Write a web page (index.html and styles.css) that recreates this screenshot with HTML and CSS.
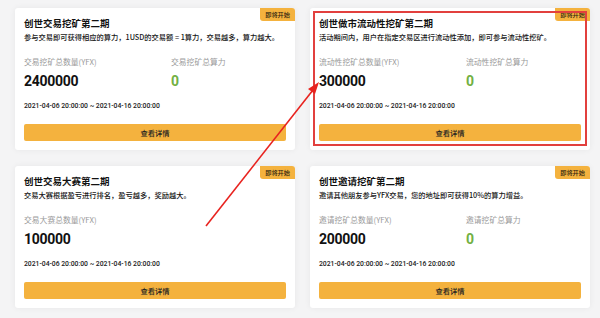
FILE: index.html
```html
<!DOCTYPE html>
<html lang="zh-CN">
<head>
  <meta charset="UTF-8">
  <title>创世挖矿第二期</title>
  <link rel="stylesheet" href="styles.css">
</head>
<body>
  <div class="page">
    <div class="grid">

      <div class="card">
        <span class="badge">即将开始</span>
        <h2 class="title">创世交易挖矿第二期</h2>
        <p class="desc">参与交易即可获得相应的算力，1USD的交易额 = 1算力，交易越多，算力越大。</p>
        <div class="stats">
          <div class="stat">
            <div class="label">交易挖矿总数量(YFX)</div>
            <div class="value">2400000</div>
          </div>
          <div class="stat">
            <div class="label">交易挖矿总算力</div>
            <div class="value green">0</div>
          </div>
        </div>
        <div class="time">2021-04-06 20:00:00 ~ 2021-04-16 20:00:00</div>
        <button class="btn">查看详情</button>
      </div>

      <div class="card">
        <span class="badge">即将开始</span>
        <h2 class="title">创世做市流动性挖矿第二期</h2>
        <p class="desc">活动期间内，用户在指定交易区进行流动性添加，即可参与流动性挖矿。</p>
        <div class="stats">
          <div class="stat">
            <div class="label">流动性挖矿总数量(YFX)</div>
            <div class="value">300000</div>
          </div>
          <div class="stat">
            <div class="label">流动性挖矿总算力</div>
            <div class="value green">0</div>
          </div>
        </div>
        <div class="time">2021-04-06 20:00:00 ~ 2021-04-16 20:00:00</div>
        <button class="btn">查看详情</button>
      </div>

      <div class="card">
        <span class="badge">即将开始</span>
        <h2 class="title">创世交易大赛第二期</h2>
        <p class="desc">交易大赛根据盈亏进行排名，盈亏越多，奖励越大。</p>
        <div class="stats">
          <div class="stat">
            <div class="label">交易大赛总数量(YFX)</div>
            <div class="value">100000</div>
          </div>
        </div>
        <div class="time">2021-04-06 20:00:00 ~ 2021-04-16 20:00:00</div>
        <button class="btn">查看详情</button>
      </div>

      <div class="card">
        <span class="badge">即将开始</span>
        <h2 class="title">创世邀请挖矿第二期</h2>
        <p class="desc">邀请其他朋友参与YFX交易，您的地址即可获得10%的算力增益。</p>
        <div class="stats">
          <div class="stat">
            <div class="label">邀请挖矿总数量(YFX)</div>
            <div class="value">200000</div>
          </div>
          <div class="stat">
            <div class="label">邀请挖矿总算力</div>
            <div class="value green">0</div>
          </div>
        </div>
        <div class="time">2021-04-06 20:00:00 ~ 2021-04-16 20:00:00</div>
        <button class="btn">查看详情</button>
      </div>

    </div>

    <!-- annotation on top of the screenshot -->
    <div class="mark-box"></div>
    <svg class="mark-arrow" width="600" height="318" viewBox="0 0 600 318">
      <line x1="206" y1="226" x2="313" y2="90" stroke="#e8231f" stroke-width="1.6"/>
      <polygon points="319,82 308,89 315,94" fill="#e8231f"/>
    </svg>
  </div>
</body>
</html>
```

FILE: styles.css
```css
html, body {
  margin: 0;
  padding: 0;
  background: #f4f4f5;
  font-family: "Noto Sans CJK SC", "Noto Sans", sans-serif;
  color: #1f1f1f;
}

.page {
  position: relative;
  width: 600px;
  height: 318px;
  overflow: hidden;
}

.grid {
  display: grid;
  grid-template-columns: 280px 280px;
  column-gap: 15px;
  row-gap: 16px;
  padding: 8px 10px 0 15px;
}

.card {
  position: relative;
  background: #fff;
  border-radius: 3px;
  padding: 8px 9px 9px;
  box-shadow: 0 0 6px rgba(0, 0, 0, 0.06);
}

.badge {
  position: absolute;
  top: 0;
  right: 0;
  height: 13px;
  line-height: 13px;
  padding: 0 5px;
  font-size: 6.2px;
  font-weight: 500;
  color: #2e2210;
  background: #f4b23e;
  border-radius: 0 3px 0 3px;
}

.title {
  margin: 0;
  font-size: 9.5px;
  line-height: 14px;
  font-weight: bold;
  color: #111;
}

.desc {
  margin: 2px 0 0;
  font-size: 7.25px;
  line-height: 11px;
  font-weight: 500;
  color: #151515;
}

.stats {
  display: grid;
  grid-template-columns: 147px 1fr;
  margin-top: 14px;
}

.label {
  font-size: 7.8px;
  line-height: 10px;
  color: #9a9a9a;
}

.value {
  margin-top: 5px;
  font-family: Roboto, "Noto Sans", sans-serif;
  font-size: 14px;
  line-height: 18px;
  font-weight: bold;
  letter-spacing: -0.3px;
  color: #111;
}

.value.green {
  color: #72b043;
}

.time {
  margin-top: 11px;
  font-family: Roboto, "Noto Sans", sans-serif;
  font-size: 6.8px;
  line-height: 10px;
  font-weight: 500;
  color: #1a1a1a;
}

.btn {
  display: block;
  width: 100%;
  height: 17px;
  margin-top: 13px;
  padding: 0;
  border: none;
  border-radius: 2px;
  background: #f4b23e;
  font-family: "Noto Sans CJK SC", "Noto Sans", sans-serif;
  font-size: 7.3px;
  font-weight: 500;
  color: #222;
  cursor: pointer;
}

.mark-box {
  position: absolute;
  left: 313px;
  top: 11px;
  width: 270px;
  height: 131px;
  border: 2px solid #e2403e;
}

.mark-arrow {
  position: absolute;
  left: 0;
  top: 0;
  pointer-events: none;
}
```
